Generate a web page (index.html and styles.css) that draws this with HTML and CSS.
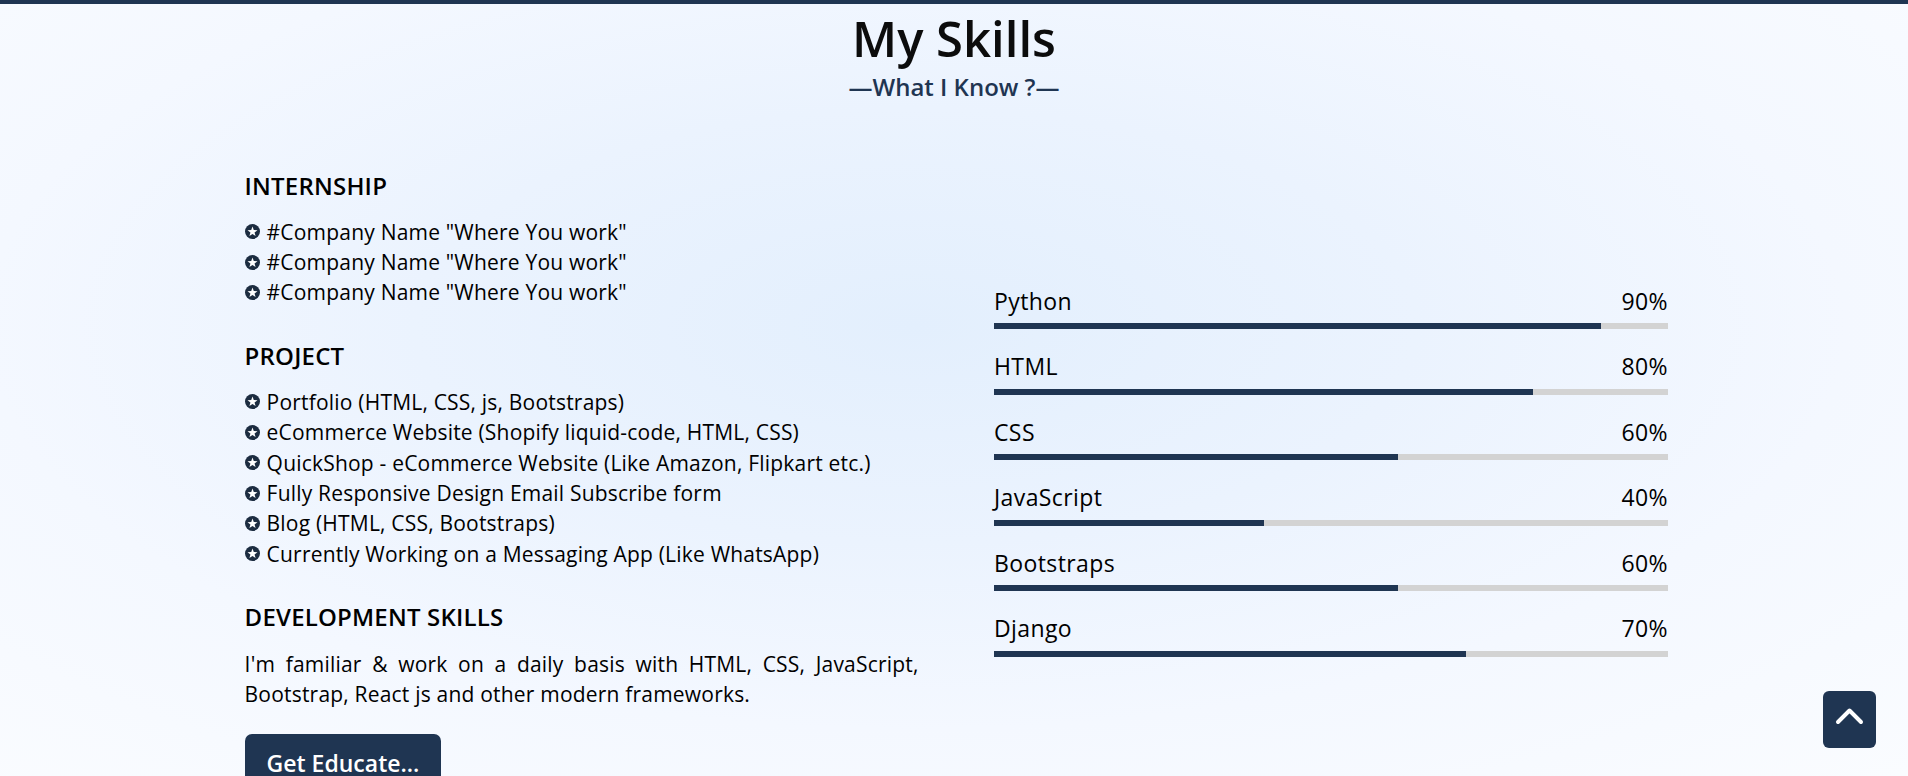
FILE: index.html
```html
<!DOCTYPE html>
<html lang="en">
<head>
<meta charset="utf-8">
<title>My Skills</title>
<link rel="stylesheet" href="styles.css">
</head>
<body>
<section class="skills">
  <header class="skills-head">
    <h1 class="title">My Skills</h1>
    <p class="subtitle">—What I Know ?—</p>
  </header>
  <div class="skills-grid">
    <div class="info">
      <h3 class="info-title">INTERNSHIP</h3>
      <ul class="info-list">
        <li><svg class="star" viewBox="0 0 16 16"><circle cx="8" cy="8" r="8"/><polygon points="8,2.7 9.35,6.44 13.33,6.57 10.19,9.01 11.29,12.83 8,10.6 4.71,12.83 5.81,9.01 2.67,6.57 6.65,6.44"/></svg>#Company Name "Where You work"</li>
        <li><svg class="star" viewBox="0 0 16 16"><circle cx="8" cy="8" r="8"/><polygon points="8,2.7 9.35,6.44 13.33,6.57 10.19,9.01 11.29,12.83 8,10.6 4.71,12.83 5.81,9.01 2.67,6.57 6.65,6.44"/></svg>#Company Name "Where You work"</li>
        <li><svg class="star" viewBox="0 0 16 16"><circle cx="8" cy="8" r="8"/><polygon points="8,2.7 9.35,6.44 13.33,6.57 10.19,9.01 11.29,12.83 8,10.6 4.71,12.83 5.81,9.01 2.67,6.57 6.65,6.44"/></svg>#Company Name "Where You work"</li>
      </ul>
      <h3 class="info-title">PROJECT</h3>
      <ul class="info-list">
        <li><svg class="star" viewBox="0 0 16 16"><circle cx="8" cy="8" r="8"/><polygon points="8,2.7 9.35,6.44 13.33,6.57 10.19,9.01 11.29,12.83 8,10.6 4.71,12.83 5.81,9.01 2.67,6.57 6.65,6.44"/></svg>Portfolio (HTML, CSS, js, Bootstraps)</li>
        <li><svg class="star" viewBox="0 0 16 16"><circle cx="8" cy="8" r="8"/><polygon points="8,2.7 9.35,6.44 13.33,6.57 10.19,9.01 11.29,12.83 8,10.6 4.71,12.83 5.81,9.01 2.67,6.57 6.65,6.44"/></svg>eCommerce Website (Shopify liquid-code, HTML, CSS)</li>
        <li><svg class="star" viewBox="0 0 16 16"><circle cx="8" cy="8" r="8"/><polygon points="8,2.7 9.35,6.44 13.33,6.57 10.19,9.01 11.29,12.83 8,10.6 4.71,12.83 5.81,9.01 2.67,6.57 6.65,6.44"/></svg>QuickShop - eCommerce Website (Like Amazon, Flipkart etc.)</li>
        <li><svg class="star" viewBox="0 0 16 16"><circle cx="8" cy="8" r="8"/><polygon points="8,2.7 9.35,6.44 13.33,6.57 10.19,9.01 11.29,12.83 8,10.6 4.71,12.83 5.81,9.01 2.67,6.57 6.65,6.44"/></svg>Fully Responsive Design Email Subscribe form</li>
        <li><svg class="star" viewBox="0 0 16 16"><circle cx="8" cy="8" r="8"/><polygon points="8,2.7 9.35,6.44 13.33,6.57 10.19,9.01 11.29,12.83 8,10.6 4.71,12.83 5.81,9.01 2.67,6.57 6.65,6.44"/></svg>Blog (HTML, CSS, Bootstraps)</li>
        <li><svg class="star" viewBox="0 0 16 16"><circle cx="8" cy="8" r="8"/><polygon points="8,2.7 9.35,6.44 13.33,6.57 10.19,9.01 11.29,12.83 8,10.6 4.71,12.83 5.81,9.01 2.67,6.57 6.65,6.44"/></svg>Currently Working on a Messaging App (Like WhatsApp)</li>
      </ul>
      <h3 class="info-title">DEVELOPMENT SKILLS</h3>
      <p class="info-text">I'm familiar &amp; work on a daily basis with HTML, CSS, JavaScript, Bootstrap, React js and other modern frameworks.</p>
      <a class="btn" href="#">Get Educate...</a>
    </div>
    <div class="bars">
      <div class="bar-row">
        <div class="bar-label"><span>Python</span><span>90%</span></div>
        <div class="bar-track"><div class="bar-fill" style="width:90%"></div></div>
      </div>
      <div class="bar-row">
        <div class="bar-label"><span>HTML</span><span>80%</span></div>
        <div class="bar-track"><div class="bar-fill" style="width:80%"></div></div>
      </div>
      <div class="bar-row">
        <div class="bar-label"><span>CSS</span><span>60%</span></div>
        <div class="bar-track"><div class="bar-fill" style="width:60%"></div></div>
      </div>
      <div class="bar-row">
        <div class="bar-label"><span>JavaScript</span><span>40%</span></div>
        <div class="bar-track"><div class="bar-fill" style="width:40%"></div></div>
      </div>
      <div class="bar-row">
        <div class="bar-label"><span>Bootstraps</span><span>60%</span></div>
        <div class="bar-track"><div class="bar-fill" style="width:60%"></div></div>
      </div>
      <div class="bar-row">
        <div class="bar-label"><span>Django</span><span>70%</span></div>
        <div class="bar-track"><div class="bar-fill" style="width:70%"></div></div>
      </div>
    </div>
  </div>
</section>
<a class="to-top" href="#"><svg viewBox="0 0 29 18" class="chev"><polyline points="3,15 14.5,3.5 26,15"/></svg></a>
</body>
</html>
```

FILE: styles.css
```css
html, body {
  margin: 0;
  padding: 0;
}

body {
  height: 772px;
  overflow: hidden;
  border-top: 4px solid #1f3552;
  background: radial-gradient(ellipse 75% 80% at 48% 42%, #e3effd 0%, #ebf3fe 35%, #f4f8ff 65%, #fafcff 100%);
  font-family: "Open Sans", "DejaVu Sans", sans-serif;
  color: #000;
}

.skills-head {
  text-align: center;
  padding-top: 6px;
}

.title {
  margin: 0;
  font-family: "Open Sans", sans-serif;
  font-weight: 600;
  font-size: 49px;
  line-height: 56px;
  color: #0c0c0c;
}

.subtitle {
  margin: 6px 0 0;
  font-family: "Open Sans", sans-serif;
  font-size: 24px;
  line-height: 30px;
  font-weight: 600;
  color: #1f3552;
}

.skills-grid {
  display: grid;
  grid-template-columns: 674px 674px;
  column-gap: 75.4px;
  width: 1424px;
  box-sizing: border-box;
  padding-left: 2.6px;
  margin: 68.5px auto 0;
  align-items: start;
}

.info-title {
  margin: 33px 0 16px;
  font-size: 24px;
  line-height: 30px;
  font-weight: 600;
  letter-spacing: 0.2px;
  color: #000;
}

.info-title:first-child {
  margin-top: 0;
}

.info-list {
  list-style: none;
  margin: 0;
  padding: 0;
  font-size: 21px;
  letter-spacing: 0.2px;
  line-height: 30.4px;
}

.info-list li {
  display: flex;
  align-items: center;
  gap: 7px;
}

.star {
  width: 15px;
  height: 15px;
  flex: none;
  fill: #1c2c40;
}

.star polygon {
  fill: #ffffff;
}

.info-text {
  margin: 16.8px 0 0;
  font-size: 21px;
  letter-spacing: 0.2px;
  line-height: 30.4px;
  text-align: justify;
}

.btn {
  display: inline-block;
  margin-top: 24px;
  padding: 14px 22px;
  background: #1f3552;
  color: #fff;
  font-size: 23px;
  font-weight: 600;
  line-height: 30px;
  border-radius: 7px;
  text-decoration: none;
}

.bars {
  padding-top: 115px;
}

.bar-row {
  margin-bottom: 22px;
}

.bar-label {
  display: flex;
  justify-content: space-between;
  font-size: 23px;
  letter-spacing: 0.4px;
  line-height: 30px;
}

.bar-track {
  margin-top: 7.5px;
  height: 6px;
  background: #d3d3d3;
}

.bar-fill {
  height: 100%;
  background: #1f3552;
}

.to-top {
  position: fixed;
  right: 32px;
  bottom: 28px;
  width: 53px;
  height: 57px;
  border-radius: 6px;
  background: #1f3552;
  display: flex;
  align-items: center;
  justify-content: center;
  padding-bottom: 8px;
  box-sizing: border-box;
}

.chev {
  width: 29px;
  height: 18px;
  fill: none;
  stroke: #fff;
  stroke-width: 4;
  stroke-linecap: round;
  stroke-linejoin: round;
}
```
